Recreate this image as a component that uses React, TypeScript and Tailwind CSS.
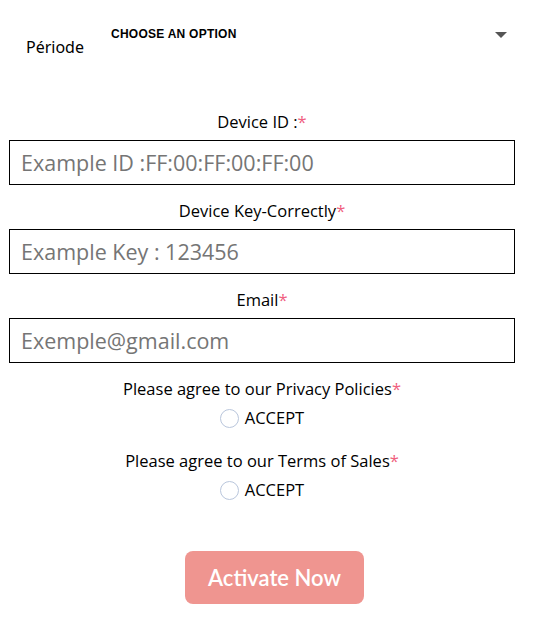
import { useState } from "react"

const FIELDS = [
  { label: "Device ID :", placeholder: "Example ID :FF:00:FF:00:FF:00" },
  { label: "Device Key-Correctly", placeholder: "Example Key : 123456" },
  { label: "Email", placeholder: "Exemple@gmail.com" },
]

const AGREE = ["Please agree to our Privacy Policies", "Please agree to our Terms of Sales"]

function Star() {
  return <span className="text-[#f0607e]">*</span>
}

export default function App() {
  const [accepted, setAccepted] = useState<boolean[]>([false, false])

  return (
    <div className="min-h-[634px] w-[539px] bg-white text-black [font-family:'Open_Sans',sans-serif]">
      {/* période select */}
      <div className="flex items-start pl-[26px] pr-[32px]">
        <span className="mt-[37px] w-[85px] text-[16px] leading-[20px] [font-family:'Noto_Sans',sans-serif]">Période</span>
        <button type="button" className="mt-[27px] flex flex-1 items-start justify-between">
          <span className="text-[12px] leading-[14px] font-bold tracking-[0.25px] [font-family:'Liberation_Sans',Arial,sans-serif]">
            CHOOSE AN OPTION
          </span>
          <svg width="12" height="6" viewBox="0 0 12 6" className="mt-[5px]" aria-hidden="true">
            <path d="M0 0h12L6 6z" fill="#555" />
          </svg>
        </button>
      </div>

      <form className="mt-[53px] w-[506px] ml-[9px] flex flex-col">
        {FIELDS.map((f) => (
          <div key={f.label} className="mb-[14px] flex flex-col">
            <label className="mb-[6px] text-center text-[16.5px] leading-[24px]">
              {f.label}
              <Star />
            </label>
            <input
              placeholder={f.placeholder}
              className="h-[45px] w-full border border-black px-[11px] text-[21.5px] text-[#222] outline-none placeholder:text-[#757575]"
            />
          </div>
        ))}

        {AGREE.map((a, i) => (
          <div key={a} className={`flex flex-col items-center ${i === 0 ? "mt-0" : "mt-[19px]"}`}>
            <div className="text-[16.5px] leading-[24px]">
              {a}
              <Star />
            </div>
            <label className="mt-[5px] flex cursor-pointer items-center gap-[6px] text-[16.5px] leading-[24px]">
              <span
                onClick={() => setAccepted((s) => s.map((v, j) => (j === i ? !v : v)))}
                className="flex h-[19px] w-[19px] items-center justify-center rounded-full border border-[#b9c6dc] bg-white"
              >
                {accepted[i] && <span className="h-[9px] w-[9px] rounded-full bg-[#ef9590]" />}
              </span>
              ACCEPT
            </label>
          </div>
        ))}

        <button
          type="button"
          className="mt-[49px] ml-[176px] h-[53px] w-[179px] rounded-[8px] bg-[#ef9590] text-[22px] font-semibold text-white [font-family:'Lato',sans-serif]"
        >
          Activate Now
        </button>
      </form>
    </div>
  )
}
